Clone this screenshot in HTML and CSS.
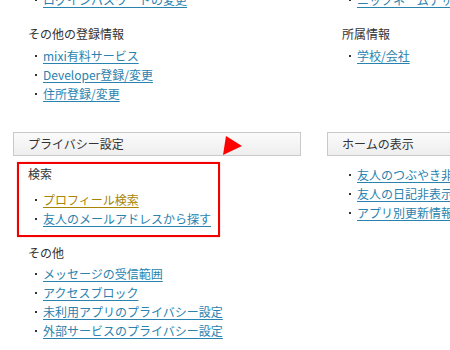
FILE: index.html
```html
<!DOCTYPE html>
<html lang="ja">
<head>
<meta charset="utf-8">
<title>設定変更</title>
<link rel="stylesheet" href="styles.css">
</head>
<body>
<div class="page">
  <div class="row row-top">
    <div class="col">
      <ul class="links">
        <li><a href="#">ログインパスワードの変更</a></li>
      </ul>
      <div class="section">
        <h3 class="heading">その他の登録情報</h3>
        <ul class="links">
          <li><a href="#">mixi有料サービス</a></li>
          <li><a href="#">Developer登録/変更</a></li>
          <li><a href="#">住所登録/変更</a></li>
        </ul>
      </div>
    </div>
    <div class="col">
      <ul class="links">
        <li><a href="#">ニックネームデザイン</a></li>
      </ul>
      <div class="section">
        <h3 class="heading">所属情報</h3>
        <ul class="links">
          <li><a href="#">学校/会社</a></li>
        </ul>
      </div>
    </div>
  </div>
  <div class="row row-bottom">
    <div class="col">
      <div class="box-head">
        <h2 class="box-title">プライバシー設定</h2>
        <svg class="arrow" width="19" height="19" viewBox="0 0 19 19"><polygon points="3,0 19,10 0,19" fill="#ff0000"/></svg>
      </div>
      <div class="section section-search">
        <div class="highlight"></div>
        <h3 class="heading">検索</h3>
        <ul class="links">
          <li><a href="#" class="visited">プロフィール検索</a></li>
          <li><a href="#">友人のメールアドレスから探す</a></li>
        </ul>
      </div>
      <div class="section section-other">
        <h3 class="heading">その他</h3>
        <ul class="links">
          <li><a href="#">メッセージの受信範囲</a></li>
          <li><a href="#">アクセスブロック</a></li>
          <li><a href="#">未利用アプリのプライバシー設定</a></li>
          <li><a href="#">外部サービスのプライバシー設定</a></li>
        </ul>
      </div>
    </div>
    <div class="col">
      <div class="box-head">
        <h2 class="box-title">ホームの表示</h2>
      </div>
      <ul class="links home-links">
        <li><a href="#">友人のつぶやき非表示</a></li>
        <li><a href="#">友人の日記非表示</a></li>
        <li><a href="#">アプリ別更新情報表示</a></li>
      </ul>
    </div>
  </div>
</div>
</body>
</html>
```

FILE: styles.css
```css
html, body {
  margin: 0;
  padding: 0;
  background: #ffffff;
  overflow: hidden;
}
body {
  width: 450px;
  height: 350px;
  font-family: "Noto Sans CJK JP", "Noto Sans", sans-serif;
  font-size: 12px;
  color: #333333;
}
.page {
  margin-top: -10px;
  padding-left: 13px;
  width: 700px;
}
.row {
  display: grid;
  grid-template-columns: 288px 288px;
  column-gap: 26px;
}
.row-bottom {
  margin-top: 29px;
}
.col {
  min-width: 0;
}
.links {
  list-style: none;
  margin: 0;
  padding: 0;
}
.links li {
  display: flex;
  align-items: center;
  height: 19px;
  line-height: 19px;
  padding-left: 22px;
  white-space: nowrap;
}
.links li::before {
  content: "";
  display: inline-block;
  width: 2px;
  height: 2px;
  background: #333333;
  margin-right: 6px;
  flex: none;
}
.links a {
  color: #2a82ae;
  text-decoration: underline;
  text-underline-offset: 2px;
}
.links a.visited {
  color: #a88400;
}
.section {
  margin-top: 15px;
}
.heading {
  margin: 0 0 3px 0;
  padding-left: 15px;
  font-size: 12px;
  font-weight: normal;
  line-height: 19px;
  height: 19px;
  color: #333333;
}
.box-head {
  position: relative;
  height: 22px;
  border: 1px solid #c9c9c9;
  background: linear-gradient(#fbfbfb, #eeeeee);
}
.box-title {
  margin: 0;
  padding-left: 14px;
  font-size: 12px;
  font-weight: normal;
  line-height: 22px;
  color: #333333;
  white-space: nowrap;
}
.arrow {
  position: absolute;
  left: 209px;
  top: 3px;
}
.section-search {
  position: relative;
  margin-top: 8px;
}
.section-search .heading {
  margin-bottom: 7px;
}
.highlight {
  position: absolute;
  left: 4px;
  top: -2px;
  width: 199px;
  height: 71px;
  border: 2px solid #f20000;
  box-shadow: 0 0 1px rgba(255, 0, 0, 0.5);
  pointer-events: none;
}
.section-other .heading {
  margin-bottom: 2px;
}
.home-links {
  margin-top: 9px;
}
```
